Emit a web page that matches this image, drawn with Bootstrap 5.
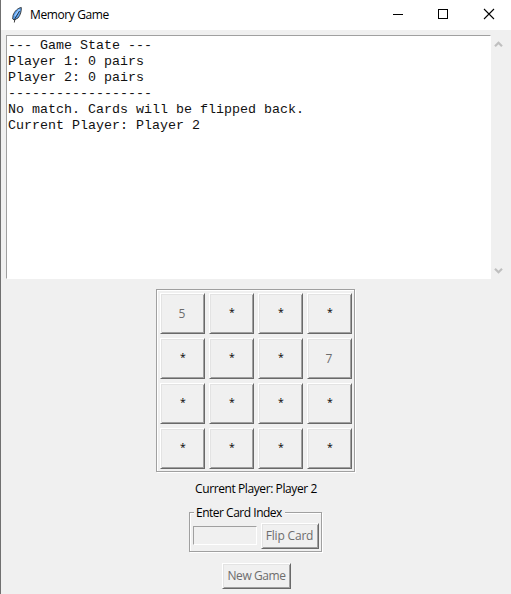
<!DOCTYPE html>
<html lang="en">
<head>
<meta charset="utf-8">
<title>Memory Game</title>
<link href="https://cdn.jsdelivr.net/npm/bootstrap@5.3.0/dist/css/bootstrap.min.css" rel="stylesheet">
<style>
body{width:511px;height:594px;background:#f0f0f0;color:#000;font:12px/16px "Open Sans","Noto Sans",sans-serif;overflow:hidden}
.window{height:594px;border-left:1px solid #707070}
.titlebar{height:30px;background:#fff;padding-left:9px}
.titlebar .caption{margin-left:7px;letter-spacing:-.38px}
.winctl{width:45px;height:30px;padding-top:1px}
.winctl svg{margin-left:1px}
.console-row{padding:5px 0 0 5px}
.console{width:485px;height:244px;background:#fff;border:1px solid #fff;border-top-color:#a0a0a0;border-left-color:#a0a0a0;padding:2px 1px 1px;font:13.333px/16px "Liberation Mono",monospace;color:#111}
.scroller{width:15px;padding:6px 0 5px}
.groove{border:1px solid #a0a0a0;box-shadow:inset 1px 1px #fff,1px 1px #fff}
main{margin-left:-1px}
.board{width:199px;height:183px;margin-top:10px;padding:3px 0 0 3px;display:grid;grid-template-columns:repeat(4,45px);grid-auto-rows:41px;gap:4px}
.tkbtn{background:#f0f0f0;color:#000;border:1px solid;border-color:#fff #696969 #696969 #fff;border-radius:0;box-shadow:inset 1px 1px #e3e3e3,inset -1px -1px #a0a0a0;padding:0;font:12px/16px "Open Sans","Noto Sans",sans-serif;display:flex;align-items:center;justify-content:center;white-space:nowrap}
.tkbtn:disabled{color:#6d6d6d}
.board .tkbtn:disabled{padding-right:1px}
.board .tkbtn:enabled{font-size:10.5px;padding:0 0 3px 1px}
.status{margin-top:9px;padding-left:1px;letter-spacing:-.41px}
.entrybox{width:133px;height:40px;margin-top:15px;padding:10px 2px 0 3px}
.entrybox .heading{margin:-18px 0 2px 1px;padding:0 2px;background:#f0f0f0;width:91px;height:16px;white-space:nowrap;letter-spacing:-.49px}
.entry{width:64px;height:19px;background:#f0f0f0;border:1px solid #fff;border-top-color:#a0a0a0;border-left-color:#a0a0a0;border-radius:0;margin-top:3px;padding:0}
.flip{width:58px;height:26px;letter-spacing:-.18px;padding-right:1px}
.newgame{width:69px;height:26px;margin:11px 0 0 2px;letter-spacing:-.42px}
</style>
<script src="https://cdn.jsdelivr.net/npm/bootstrap@5.3.0/dist/js/bootstrap.bundle.min.js"></script>
</head>
<body>
<div class="window d-flex flex-column">
  <header class="titlebar d-flex align-items-center">
    <svg width="13" height="18" viewBox="0 0 13 18"><path d="M11.300 1.500C8 2 4.500 5 3 9.500L2.700 13l1.500 1L8 12c2.500-3 3.500-7 3.300-10.500z" fill="#5ba3f2" stroke="#303030" stroke-width=".9"/><path d="M9.500 3.500L5 10" stroke="#9ccaff" stroke-width="1.500"/><path d="M9.500 5L5 12.500 4.300 16.500" stroke="#111" stroke-width=".8" fill="none"/></svg>
    <span class="caption">Memory Game</span>
    <div class="d-flex ms-auto me-0">
      <div class="winctl"><svg width="44" height="28" shape-rendering="crispEdges"><path d="M16 13.500h10" stroke="#000"/></svg></div>
      <div class="winctl"><svg width="44" height="28" shape-rendering="crispEdges"><path d="M16.500 8.500h9v9h-9z" fill="none" stroke="#000"/></svg></div>
      <div class="winctl"><svg width="44" height="28"><path d="M17 8l10 10M27 8L17 18" stroke="#000" stroke-width="1.100"/></svg></div>
    </div>
  </header>
  <div class="console-row d-flex">
    <pre class="console m-0 overflow-hidden">--- Game State ---
Player 1: 0 pairs
Player 2: 0 pairs
------------------
No match. Cards will be flipped back.
Current Player: Player 2</pre>
    <div class="scroller d-flex flex-column justify-content-between align-items-center">
      <svg width="9" height="7"><path d="M1 5.300L4.500 1.800 8 5.300" fill="none" stroke="#bfbfbf" stroke-width="2.200"/></svg>
      <svg width="9" height="7"><path d="M1 1.700L4.500 5.200 8 1.700" fill="none" stroke="#bfbfbf" stroke-width="2.200"/></svg>
    </div>
  </div>
  <main class="d-flex flex-column align-items-center">
    <div class="board groove">
      <button class="tkbtn" disabled>5</button><button class="tkbtn">*</button><button class="tkbtn">*</button><button class="tkbtn">*</button>
      <button class="tkbtn">*</button><button class="tkbtn">*</button><button class="tkbtn">*</button><button class="tkbtn" disabled>7</button>
      <button class="tkbtn">*</button><button class="tkbtn">*</button><button class="tkbtn">*</button><button class="tkbtn">*</button>
      <button class="tkbtn">*</button><button class="tkbtn">*</button><button class="tkbtn">*</button><button class="tkbtn">*</button>
    </div>
    <div class="status">Current Player: Player 2</div>
    <div class="entrybox groove">
      <div class="heading">Enter Card Index</div>
      <div class="d-flex gap-1">
        <input class="entry" disabled aria-label="Card index">
        <button class="tkbtn flip" disabled>Flip Card</button>
      </div>
    </div>
    <button class="tkbtn newgame" disabled>New Game</button>
  </main>
</div>
</body>
</html>
